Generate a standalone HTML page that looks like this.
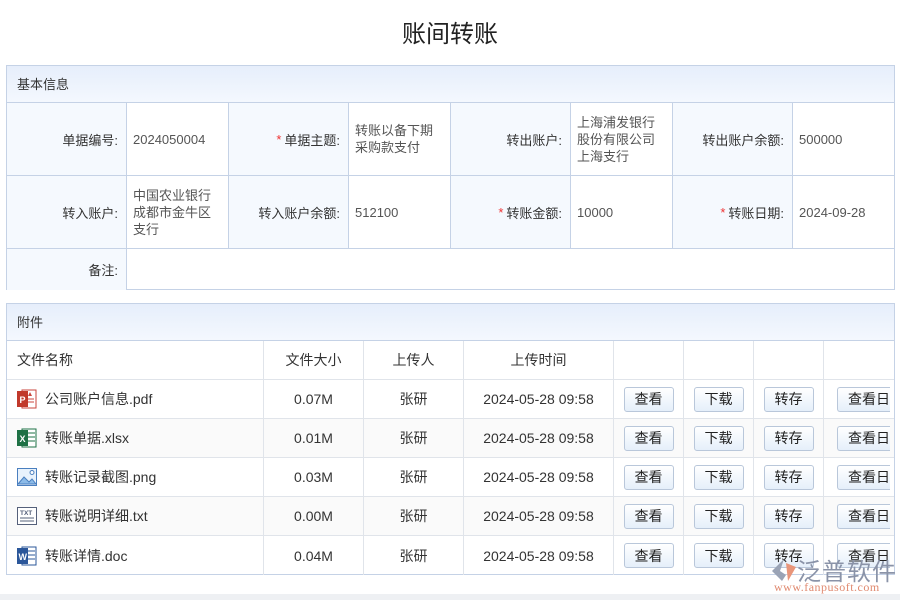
<!DOCTYPE html>
<html><head><meta charset="utf-8"><style>
*{margin:0;padding:0;box-sizing:border-box}
body{width:900px;height:600px;background:#fff;position:relative;overflow:hidden;font-family:"Liberation Sans","Noto Sans CJK SC",sans-serif;font-size:13px;color:#333}
.a{position:absolute}
.title{left:0;width:900px;top:14px;text-align:center;font-size:24px;color:#222}
.panel{border:1px solid #c5d2e6}
.hd{background:linear-gradient(#e6eefb,#f4f8fe);border-bottom:1px solid #c5d2e6;height:37px;line-height:37px;padding-left:10px;color:#333}
.c{position:absolute;border-right:1px solid #c5d2e6;border-bottom:1px solid #c5d2e6;display:flex;align-items:center}
.lb{background:#f5f9fe;justify-content:flex-end;padding-right:8px;color:#333}
.v{padding-left:6px;color:#555;line-height:17px}
.st{color:#e33;margin-right:3px}
.t{position:absolute;border-right:1px solid #e0e4ea;border-bottom:1px solid #e0e4ea;display:flex;align-items:center;justify-content:center;font-size:14px;color:#333}
.btn{width:50px;height:25px;border:1px solid #b9c7da;border-radius:3px;background:linear-gradient(#fff,#e5effa);font-size:14px;color:#222;display:flex;align-items:center;justify-content:center}
</style></head><body>
<div class="a title">账间转账</div>

<div class="a panel" style="left:6px;top:65px;width:889px;height:225px">
<div class="hd">基本信息</div>
</div>
<div class="c lb" style="left:7px;top:103px;width:120px;height:73px">单据编号:</div>
<div class="c v" style="left:127px;top:103px;width:102px;height:73px">2024050004</div>
<div class="c lb" style="left:229px;top:103px;width:120px;height:73px"><span class="st">*</span>单据主题:</div>
<div class="c v" style="left:349px;top:103px;width:102px;height:73px">转账以备下期<br>采购款支付</div>
<div class="c lb" style="left:451px;top:103px;width:120px;height:73px">转出账户:</div>
<div class="c v" style="left:571px;top:103px;width:102px;height:73px">上海浦发银行<br>股份有限公司<br>上海支行</div>
<div class="c lb" style="left:673px;top:103px;width:120px;height:73px">转出账户余额:</div>
<div class="c v" style="left:793px;top:103px;width:102px;height:73px">500000</div>
<div class="c lb" style="left:7px;top:176px;width:120px;height:73px">转入账户:</div>
<div class="c v" style="left:127px;top:176px;width:102px;height:73px">中国农业银行<br>成都市金牛区<br>支行</div>
<div class="c lb" style="left:229px;top:176px;width:120px;height:73px">转入账户余额:</div>
<div class="c v" style="left:349px;top:176px;width:102px;height:73px">512100</div>
<div class="c lb" style="left:451px;top:176px;width:120px;height:73px"><span class="st">*</span>转账金额:</div>
<div class="c v" style="left:571px;top:176px;width:102px;height:73px">10000</div>
<div class="c lb" style="left:673px;top:176px;width:120px;height:73px"><span class="st">*</span>转账日期:</div>
<div class="c v" style="left:793px;top:176px;width:102px;height:73px">2024-09-28</div>
<div class="c lb" style="left:7px;top:249px;width:120px;height:41px;border-bottom:none">备注:</div>

<div class="a panel" style="left:6px;top:303px;width:889px;height:272px">
<div class="hd">附件</div>
</div>

<div id="tbl"></div>
<script>
var cols=[[7,257],[264,100],[364,100],[464,150],[614,70],[684,70],[754,70],[824,70]];
var hdr=["文件名称","文件大小","上传人","上传时间","","","",""];
var rows=[["pdf","公司账户信息.pdf","0.07M"],["xls","转账单据.xlsx","0.01M"],["png","转账记录截图.png","0.03M"],["txt","转账说明详细.txt","0.00M"],["doc","转账详情.doc","0.04M"]];
var icons={
pdf:'<svg width="20" height="20"><rect x="5" y="1" width="14" height="18" fill="#fff" stroke="#c9463d"/><line x1="9" y1="10" x2="17" y2="10" stroke="#c9463d"/><line x1="9" y1="13" x2="17" y2="13" stroke="#c9463d"/><path d="M13 3l2 4h-4z" fill="#c9463d"/><rect x="0" y="2" width="11" height="16" fill="#c1392b"/><text x="2.5" y="14" font-size="9" font-weight="bold" fill="#fff" font-family="Liberation Sans">P</text></svg>',
xls:'<svg width="20" height="20"><rect x="5" y="1" width="14" height="18" fill="#fff" stroke="#1e7145"/><line x1="11" y1="5" x2="18" y2="5" stroke="#1e7145"/><line x1="11" y1="9" x2="18" y2="9" stroke="#1e7145"/><line x1="11" y1="13" x2="18" y2="13" stroke="#1e7145"/><rect x="0" y="2" width="11" height="16" fill="#1e7145"/><text x="2.5" y="14" font-size="9" font-weight="bold" fill="#fff" font-family="Liberation Sans">X</text></svg>',
png:'<svg width="20" height="20"><rect x="0.5" y="1.5" width="19" height="17" fill="#e8f2fc" stroke="#4a7fbf"/><path d="M1 17l6-7 5 5 3-3 4 5z" fill="#8cbbe8" stroke="#4a7fbf"/><circle cx="15" cy="5.5" r="2" fill="#fff" stroke="#4a7fbf"/></svg>',
txt:'<svg width="20" height="20"><rect x="0.5" y="1.5" width="19" height="17" fill="#fff" stroke="#55607a"/><text x="3" y="9" font-size="6.5" font-weight="bold" fill="#55607a" font-family="Liberation Sans">TXT</text><line x1="3" y1="12" x2="17" y2="12" stroke="#55607a"/><line x1="3" y1="15" x2="17" y2="15" stroke="#55607a"/></svg>',
doc:'<svg width="20" height="20"><rect x="5" y="1" width="14" height="18" fill="#fff" stroke="#2b579a"/><line x1="11" y1="5" x2="18" y2="5" stroke="#2b579a"/><line x1="11" y1="9" x2="18" y2="9" stroke="#2b579a"/><line x1="11" y1="13" x2="18" y2="13" stroke="#2b579a"/><rect x="0" y="2" width="11" height="16" fill="#2b579a"/><text x="1.5" y="14" font-size="9" font-weight="bold" fill="#fff" font-family="Liberation Sans">W</text></svg>'};
var h="";
for(var i=0;i<8;i++){var c=cols[i];var br=i==7?"border-right:none;":"";
h+='<div class="t" style="left:'+c[0]+'px;top:341px;width:'+c[1]+'px;height:39px;'+br+(i==0?'justify-content:flex-start;padding-left:10px;':'')+'">'+hdr[i]+'</div>';}
for(var r=0;r<5;r++){var y=380+r*39;var bg=r%2?"background:#fafafa;":"";var bb=r==4?"border-bottom:none;":"";
var cells=['<span style="margin-right:8px;display:flex">'+icons[rows[r][0]]+'</span>'+rows[r][1],rows[r][2],'张研','2024-05-28 09:58','<div class="btn">查看</div>','<div class="btn">下载</div>','<div class="btn">转存</div>','<div class="btn" style="width:53px;margin-left:13px;justify-content:flex-start;padding-left:10px;overflow:hidden;white-space:nowrap;border-right:none;border-radius:3px 0 0 3px">查看日志</div>'];
for(var i=0;i<8;i++){var c=cols[i];var br=i==7?"border-right:none;justify-content:flex-start;":"";
h+='<div class="t" style="left:'+c[0]+'px;top:'+y+'px;width:'+c[1]+'px;height:39px;'+bg+bb+br+(i==0?'justify-content:flex-start;padding-left:10px;':'')+'">'+cells[i]+'</div>';}}
document.getElementById("tbl").innerHTML=h;
</script>
<div class="a" style="left:0;top:594px;width:900px;height:6px;background:#eef0f3"></div>
<div class="a" style="left:770px;top:555px;width:125px;height:40px">
<svg width="28" height="26" style="position:absolute;left:0;top:2px"><path d="M14 2L2 14l10 10 4-6-6-4z" fill="#9aa3b5"/><path d="M16 6l10 4-8 14z" fill="#e8957a"/></svg>
<div class="a" style="left:27px;top:-3px;font-size:24px;color:#8a93a8;letter-spacing:1px;white-space:nowrap">泛普软件</div>
<div class="a" style="left:4px;top:25px;font-size:12px;color:#e08a70;font-family:'Liberation Serif',serif;white-space:nowrap;letter-spacing:0.5px">www.fanpusoft.com</div>
</div>
</body></html>
